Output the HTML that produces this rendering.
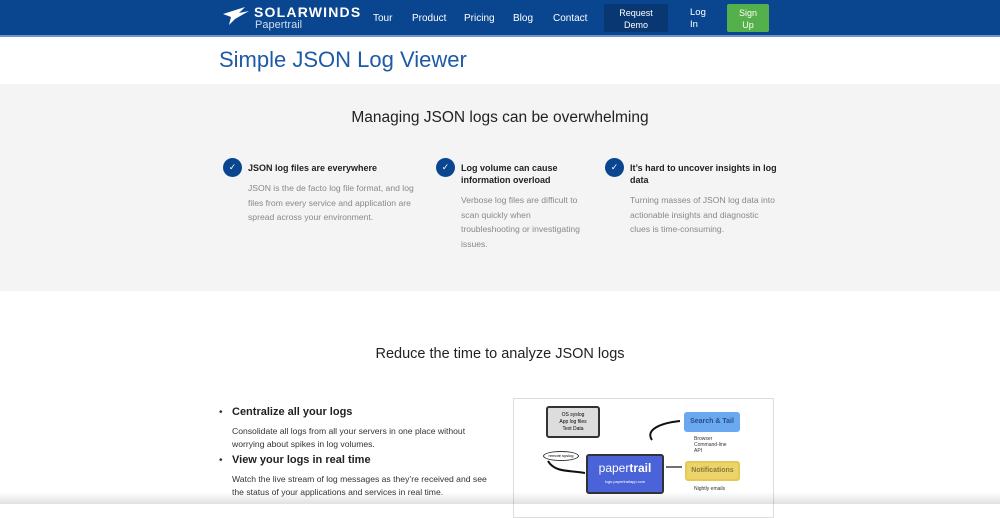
<!DOCTYPE html>
<html><head><style>
*{margin:0;padding:0;box-sizing:border-box}
body{width:1000px;height:504px;overflow:hidden;font-family:"Liberation Sans",sans-serif;background:#fff;position:relative}
.nav{position:absolute;left:0;top:0;width:1000px;height:37px;background:#0a4690;border-bottom:2px solid #6f95c8}
.nav .t{position:absolute;color:#fff;font-size:10px}
.a{position:absolute;color:#333}
.gray{position:absolute;left:0;top:84px;width:1000px;height:207px;background:#f4f4f4}
.chk{position:absolute;width:19px;height:19px;border-radius:50%;background:#0a4690;color:#fff;font-size:9px;text-align:center;line-height:19px}
.h{position:absolute;font-size:9px;font-weight:bold;color:#222;line-height:12px}
.p{position:absolute;font-size:8.6px;color:#888;line-height:14.7px}
.box{position:absolute;border:2px solid #333;border-radius:3px;text-align:center}
</style></head><body>
<div class="nav">
<svg style="position:absolute;left:221px;top:5px" width="30" height="24" viewBox="0 0 30 24"><path d="M2 9 L24 2 L18 8 L28 6 L14 14 L8 20 L10 12 Z" fill="#fff"/></svg>
<div class="t" style="left:254px;top:4px;font-size:14px;font-weight:bold;letter-spacing:1.2px">SOLARWINDS</div>
<div class="t" style="left:255px;top:19px;font-size:11px;color:#d0dcef">Papertrail</div>
<div class="t" style="left:373px;top:13px">Tour</div>
<div class="t" style="left:412px;top:13px">Product</div>
<div class="t" style="left:464px;top:13px">Pricing</div>
<div class="t" style="left:513px;top:13px">Blog</div>
<div class="t" style="left:553px;top:13px">Contact</div>
<div style="position:absolute;left:604px;top:4px;width:64px;height:28px;background:#083772;border-radius:2px;color:#fff;font-size:9px;text-align:center;line-height:12px;padding-top:3px">Request<br>Demo</div>
<div class="t" style="left:690px;top:7px;font-size:9.5px;line-height:12px">Log<br>In</div>
<div style="position:absolute;left:727px;top:4px;width:42px;height:28px;background:#54b04a;border-radius:2px;color:#fff;font-size:9px;text-align:center;line-height:12px;padding-top:3px">Sign<br>Up</div>
</div>
<div class="a" style="left:219px;top:47px;font-size:22px;color:#1e5aa6">Simple JSON Log Viewer</div>
<div class="gray"></div>
<div class="a" style="left:0;width:1000px;text-align:center;top:109px;font-size:15.5px;color:#222">Managing JSON logs can be overwhelming</div>
<div class="chk" style="left:223px;top:158px">✓</div>
<div class="h" style="left:248px;top:162px">JSON log files are everywhere</div>
<div class="p" style="left:248px;top:181px">JSON is the de facto log file format, and log<br>files from every service and application are<br>spread across your environment.</div>
<div class="chk" style="left:436px;top:158px">✓</div>
<div class="h" style="left:461px;top:162px">Log volume can cause<br>information overload</div>
<div class="p" style="left:461px;top:193px">Verbose log files are difficult to<br>scan quickly when<br>troubleshooting or investigating<br>issues.</div>
<div class="chk" style="left:605px;top:158px">✓</div>
<div class="h" style="left:630px;top:162px">It’s hard to uncover insights in log<br>data</div>
<div class="p" style="left:630px;top:193px">Turning masses of JSON log data into<br>actionable insights and diagnostic<br>clues is time-consuming.</div>
<div class="a" style="left:0;width:1000px;text-align:center;top:346px;font-size:14.5px;color:#222">Reduce the time to analyze JSON logs</div>
<div class="a" style="left:219px;top:407px;font-size:10px">•</div>
<div class="a" style="left:232px;top:406px;font-size:11px;font-weight:bold;color:#222">Centralize all your logs</div>
<div class="a" style="left:232px;top:425px;font-size:8.6px;line-height:12.5px;color:#333">Consolidate all logs from all your servers in one place without<br>worrying about spikes in log volumes.</div>
<div class="a" style="left:219px;top:455px;font-size:10px">•</div>
<div class="a" style="left:232px;top:454px;font-size:11px;font-weight:bold;color:#222">View your logs in real time</div>
<div class="a" style="left:232px;top:473px;font-size:8.6px;line-height:12.5px;color:#333">Watch the live stream of log messages as they’re received and see<br>the status of your applications and services in real time.</div>
<div style="position:absolute;left:513px;top:398px;width:261px;height:120px;border:1px solid #ddd;background:#fff"></div>
<div class="box" style="left:546px;top:406px;width:54px;height:32px;background:#ddd;font-size:5px;line-height:7px;padding-top:4px">OS syslog<br>App log files<br>Text Data</div>
<div style="position:absolute;left:543px;top:451px;width:36px;height:10px;border:1px solid #333;border-radius:50%;font-size:4px;text-align:center;line-height:8px">remote syslog</div>
<div class="box" style="left:586px;top:454px;width:78px;height:40px;background:#4a63d8;color:#fff;font-size:12px;padding-top:5px">paper<b>trail</b><div style="font-size:4px;margin-top:4px">logs.papertrailapp.com</div></div>
<div class="box" style="left:684px;top:412px;width:56px;height:20px;background:#6aa8ef;color:#2a4e8a;font-size:7px;font-weight:bold;line-height:16px;border-color:#6aa8ef">Search &amp; Tail</div>
<div class="a" style="left:694px;top:436px;font-size:5px;line-height:6px">Browser<br>Command-line<br>API</div>
<div class="box" style="left:685px;top:461px;width:55px;height:20px;background:#ecd36a;color:#8a7a3a;font-size:7px;font-weight:bold;line-height:16px;border-color:#e3c85a">Notifications</div>
<div class="a" style="left:694px;top:486px;font-size:5px">Nightly emails</div>
<svg style="position:absolute;left:540px;top:415px" width="150" height="70"><path d="M8 46 C15 58 30 55 45 58" stroke="#111" stroke-width="2" fill="none"/><path d="M112 25 C105 15 120 8 140 6" stroke="#111" stroke-width="2" fill="none"/><path d="M126 52 L142 52" stroke="#111" stroke-width="1.2"/></svg>
<div style="position:absolute;left:0;top:492px;width:1000px;height:12px;background:linear-gradient(rgba(0,0,0,0),rgba(0,0,0,0.12))"></div>
</body></html>
